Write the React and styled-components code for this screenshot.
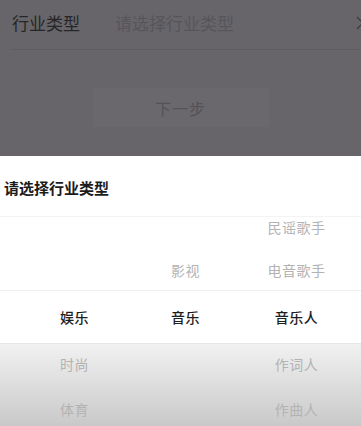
import React from 'react';
import styled, { createGlobalStyle } from 'styled-components';

const GlobalStyle = createGlobalStyle`
  html, body {
    margin: 0;
    padding: 0;
    background: #ffffff;
    font-family: "Noto Sans CJK SC", "Noto Sans", sans-serif;
  }
`;

const Page = styled.div`
  width: 361px;
  height: 426px;
  overflow: hidden;
  display: flex;
  flex-direction: column;
`;

const Backdrop = styled.div`
  height: 156px;
  flex-shrink: 0;
  background: #676569;
  display: flex;
  flex-direction: column;
`;

const FieldRow = styled.div`
  height: 50px;
  flex-shrink: 0;
  margin-left: 10px;
  border-bottom: 1px solid #5f5d61;
  display: flex;
  align-items: center;
  padding-bottom: 4px;
  box-sizing: border-box;
`;

const FieldLabel = styled.span`
  width: 103px;
  padding-left: 2px;
  font-size: 17px;
  color: #262527;
`;

const FieldValue = styled.span`
  flex: 1;
  font-size: 17px;
  color: #575559;
`;

const Chevron = styled.span`
  width: 12px;
  display: flex;
  justify-content: flex-end;
  margin-right: -3px;
`;

const NextButton = styled.div`
  margin: 38px auto 0;
  width: 176px;
  height: 39px;
  background: #6a686c;
  color: #545256;
  font-size: 16px;
  display: flex;
  align-items: center;
  justify-content: center;
  letter-spacing: 1px;
`;

const Sheet = styled.div`
  flex: 1;
  min-height: 0;
  display: flex;
  flex-direction: column;
  background: #ffffff;
`;

const SheetTitle = styled.div`
  height: 61px;
  flex-shrink: 0;
  padding-left: 4px;
  display: flex;
  align-items: center;
  font-size: 15px;
  font-weight: 700;
  color: #1c1c1c;
  border-bottom: 1px solid #f3f3f3;
  box-sizing: border-box;
  padding-top: 2px;
`;

const Viewport = styled.div`
  flex: 1;
  min-height: 0;
  overflow: hidden;
  background: linear-gradient(to bottom, #ffffff 0, #ffffff 125px, #f1f1f1 127px, #c9c9c9 100%);
`;

const Wheel = styled.div`
  margin-top: -13px;
  display: flex;
  flex-direction: column;
`;

const Row = styled.div`
  height: ${p => p.$h}px;
  flex-shrink: 0;
  display: grid;
  grid-template-columns: repeat(3, 111px);
  padding-left: 19px;
  align-items: center;
  box-sizing: border-box;
  background: ${p => (p.$selected ? '#ffffff' : 'transparent')};
  border-top: ${p => (p.$selected ? '1px solid #eeeeee' : 'none')};
  border-bottom: ${p => (p.$selected ? '1px solid #e6e6e6' : 'none')};
`;

const Cell = styled.span`
  text-align: center;
  font-size: 14px;
  color: ${p => (p.$selected ? '#1e1e1e' : '#b3b3b3')};
  font-weight: ${p => (p.$selected ? 500 : 400)};
  letter-spacing: 0.5px;
`;

const rows = [
  { h: 46, cells: ['', '', '民谣歌手'] },
  { h: 40, cells: ['', '影视', '电音歌手'] },
  { h: 54, cells: ['娱乐', '音乐', '音乐人'], selected: true },
  { h: 40, cells: ['时尚', '', '作词人'] },
  { h: 50, cells: ['体育', '', '作曲人'] },
];

export default function App() {
  return (
    <>
      <GlobalStyle />
      <Page>
        <Backdrop>
          <FieldRow>
            <FieldLabel>行业类型</FieldLabel>
            <FieldValue>请选择行业类型</FieldValue>
            <Chevron>
              <svg width="8" height="14" viewBox="0 0 8 14">
                <path d="M1 1 L7 7 L1 13" fill="none" stroke="#3e3d40" strokeWidth="1.3" />
              </svg>
            </Chevron>
          </FieldRow>
          <NextButton>下一步</NextButton>
        </Backdrop>
        <Sheet>
          <SheetTitle>请选择行业类型</SheetTitle>
          <Viewport>
            <Wheel>
              {rows.map((r, i) => (
                <Row key={i} $h={r.h} $selected={r.selected}>
                  {r.cells.map((c, j) => (
                    <Cell key={j} $selected={r.selected}>{c}</Cell>
                  ))}
                </Row>
              ))}
            </Wheel>
          </Viewport>
        </Sheet>
      </Page>
    </>
  );
}
